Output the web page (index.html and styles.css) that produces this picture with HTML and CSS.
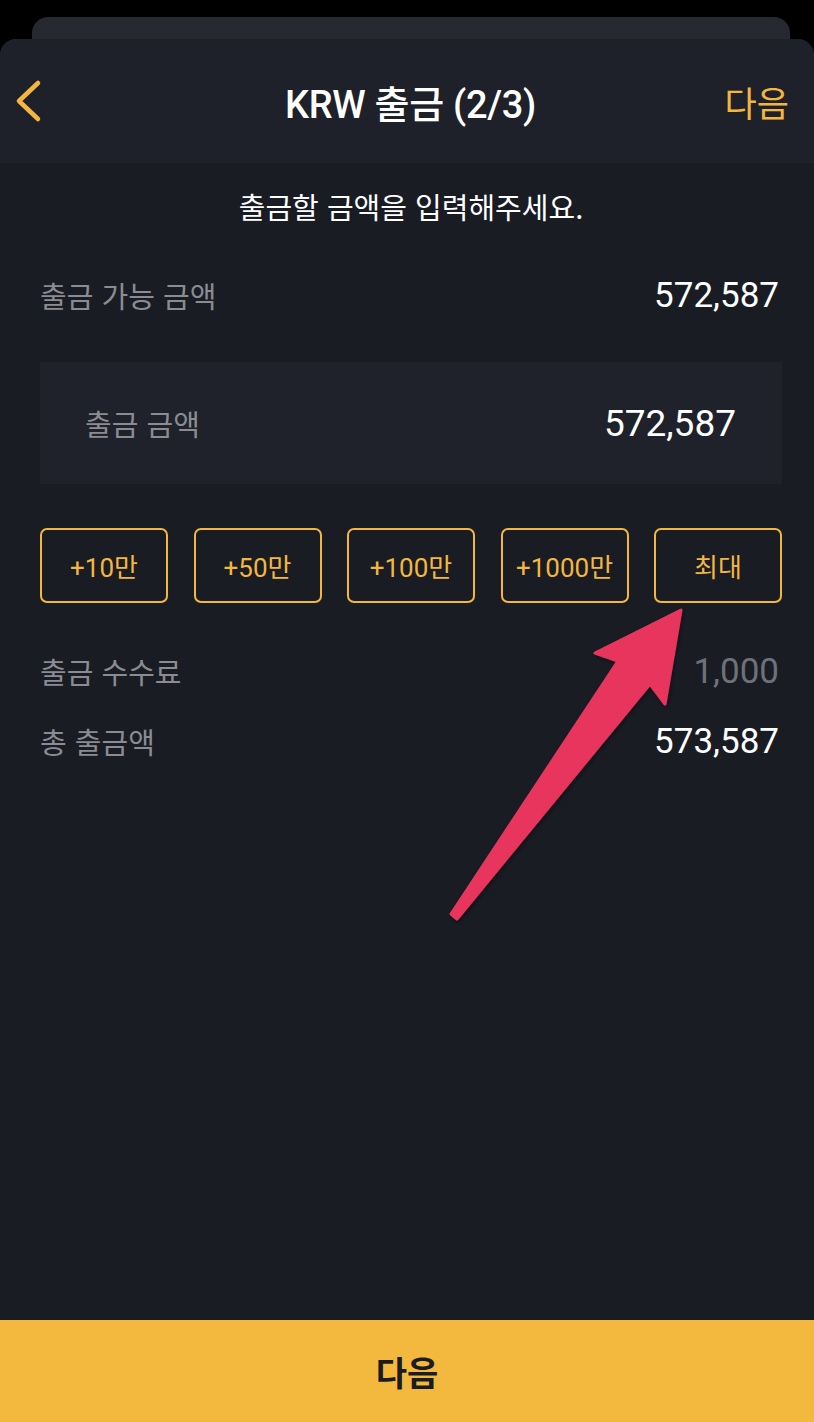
FILE: index.html
```html
<!DOCTYPE html>
<html lang="ko">
<head>
<meta charset="utf-8">
<link rel="stylesheet" href="styles.css">
</head>
<body>
<div class="screen">
  <div class="sheet-back"></div>
  <div class="sheet">
    <header class="topbar">
      <button class="back" aria-label="뒤로">
        <svg width="28" height="44" viewBox="0 0 28 44"><path d="M24 4 L5 22 L24 40" fill="none" stroke="#f3b73f" stroke-width="4.5" stroke-linecap="round" stroke-linejoin="round"/></svg>
      </button>
      <h1 class="title">KRW 출금 (2/3)</h1>
      <span class="next-link">다음</span>
    </header>
    <main class="content">
      <p class="guide">출금할 금액을 입력해주세요.</p>
      <div class="row">
        <span class="label">출금 가능 금액</span>
        <span class="value">572,587</span>
      </div>
      <div class="amount-box">
        <span class="label">출금 금액</span>
        <span class="value big">572,587</span>
      </div>
      <div class="quick">
        <button class="chip">+10만</button>
        <button class="chip">+50만</button>
        <button class="chip">+100만</button>
        <button class="chip">+1000만</button>
        <button class="chip">최대</button>
      </div>
      <div class="row fee">
        <span class="label">출금 수수료</span>
        <span class="value muted">1,000</span>
      </div>
      <div class="row total">
        <span class="label">총 출금액</span>
        <span class="value">573,587</span>
      </div>
    </main>
    <button class="submit">다음</button>
  </div>
  <svg class="arrow" width="814" height="1422" viewBox="0 0 814 1422">
    <defs>
      <filter id="sh" x="-20%" y="-20%" width="140%" height="140%">
        <feDropShadow dx="1" dy="2" stdDeviation="2" flood-color="#000" flood-opacity="0.45"/>
      </filter>
    </defs>
    <polygon filter="url(#sh)" points="681,610 665,704 650,684 457,919 451,914 618,661 595,653" fill="#e8365d" stroke="#e8365d" stroke-width="3" stroke-linejoin="round"/>
  </svg>
</div>
</body>
</html>
```
FILE: styles.css
```css
* { box-sizing: border-box; }
html, body { margin: 0; padding: 0; }
body {
  background: #000;
  font-family: Roboto, "Noto Sans CJK KR", sans-serif;
  color: #fff;
}
.screen {
  position: relative;
  width: 814px;
  height: 1422px;
  padding-top: 17px;
  display: flex;
  flex-direction: column;
  overflow: hidden;
}
.sheet-back {
  height: 22px;
  margin: 0 24px 0 32px;
  background: #26292f;
  border-radius: 16px 16px 0 0;
  flex: none;
}
.sheet {
  flex: 1;
  display: flex;
  flex-direction: column;
  background: #1a1c24;
  border-radius: 16px 16px 0 0;
  overflow: hidden;
}
.topbar {
  height: 124px;
  background: #1f212a;
  display: grid;
  grid-template-columns: 1fr auto 1fr;
  align-items: center;
  padding: 0 25px 0 14px;
  flex: none;
}
.back {
  background: none;
  border: 0;
  padding: 0;
  width: 28px;
  height: 44px;
  display: flex;
  justify-self: start;
}
.title {
  margin: 0 0 0 18px;
  font-size: 38px;
  font-weight: 500;
  color: #fff;
  letter-spacing: -0.3px;
}
.next-link {
  justify-self: end;
  font-size: 35px;
  color: #f3b73f;
  font-family: "Noto Sans CJK KR", sans-serif;
}
.content {
  flex: 1;
  padding: 23px 32px 0 40px;
  display: flex;
  flex-direction: column;
}
.guide {
  margin: 0;
  height: 40px;
  line-height: 40px;
  text-align: center;
  font-size: 29px;
  color: #fff;
  font-family: "Noto Sans CJK KR", sans-serif;
}
.row {
  display: flex;
  justify-content: space-between;
  align-items: center;
  height: 40px;
  padding-right: 3px;
  margin-top: 49px;
}
.label {
  font-size: 29px;
  color: #8a8c92;
  font-family: "Noto Sans CJK KR", sans-serif;
}
.value {
  font-size: 35px;
  color: #fff;
}
.value.big { font-size: 37px; }
.value.muted { color: #6f7178; }
.amount-box {
  margin-top: 47px;
  height: 122px;
  background: #1f212b;
  display: flex;
  align-items: center;
  justify-content: space-between;
  padding: 0 46px 0 45px;
}
.quick {
  margin-top: 44px;
  display: flex;
  justify-content: space-between;
}
.chip {
  width: 128px;
  height: 75px;
  border: 2px solid #f3b73f;
  border-radius: 7px;
  background: transparent;
  color: #f3b73f;
  font-family: Roboto, "Noto Sans CJK KR", sans-serif;
  font-size: 26px;
  padding: 0;
}
.row.fee { margin-top: 48px; }
.row.total { margin-top: 30px; }
.submit {
  flex: none;
  height: 102px;
  border: 0;
  background: #f3b93f;
  color: #1a1c22;
  font-family: "Noto Sans CJK KR", sans-serif;
  font-size: 34px;
  font-weight: 700;
  width: 100%;
}
.arrow {
  position: absolute;
  left: 0;
  top: 0;
  pointer-events: none;
}
```
